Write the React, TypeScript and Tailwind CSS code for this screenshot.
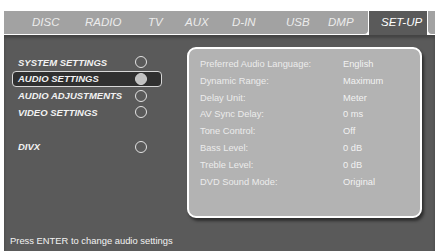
import React from "react";

const tabs = [
  { label: "DISC", w: "w-[53px]" },
  { label: "RADIO", w: "w-[63px]" },
  { label: "TV", w: "w-[37px]" },
  { label: "AUX", w: "w-[47px]" },
  { label: "D-IN", w: "w-[54px]" },
  { label: "USB", w: "w-[42px]" },
  { label: "DMP", w: "w-[40px]" },
];

const menu = [
  { label: "SYSTEM SETTINGS", active: false },
  { label: "AUDIO SETTINGS", active: true },
  { label: "AUDIO ADJUSTMENTS", active: false },
  { label: "VIDEO SETTINGS", active: false },
];

const settings = [
  ["Preferred Audio Language:", "English"],
  ["Dynamic Range:", "Maximum"],
  ["Delay Unit:", "Meter"],
  ["AV Sync Delay:", "0 ms"],
  ["Tone Control:", "Off"],
  ["Bass Level:", "0 dB"],
  ["Treble Level:", "0 dB"],
  ["DVD Sound Mode:", "Original"],
];

function MenuRow({ label, active }: { label: string; active: boolean }) {
  return (
    <div
      className={
        active
          ? "flex h-[16.7px] items-center justify-between rounded-[4px] border border-[#d8d8d8] bg-[#303030] pl-[5px] pr-[14px]"
          : "flex h-[16.7px] items-center justify-between border border-transparent pl-[5px] pr-[14px]"
      }
    >
      <span className="text-[9.5px] font-bold italic leading-none text-[#f2f2f2]">
        {label}
      </span>
      <span
        className={
          active
            ? "h-[12px] w-[12px] rounded-full border-[1.5px] border-[#d0d0d0] bg-[#c2c2c2]"
            : "h-[12px] w-[12px] rounded-full border-[1.5px] border-[#e2e2e2]"
        }
      />
    </div>
  );
}

export default function App() {
  return (
    <div
      className="flex h-[251px] w-[435px] flex-col overflow-hidden bg-white pl-[4px] pt-[11px]"
      style={{ fontFamily: '"Liberation Sans", Arial, sans-serif' }}
    >
      {/* barra de abas */}
      <div className="flex h-[24px] shrink-0">
        <div className="flex w-[365px] items-center rounded-br-[5px] border-r-[1.5px] border-b-[1.5px] border-white bg-[#a2a2a2] pl-[28px]">
          {tabs.map((t) => (
            <span
              key={t.label}
              className={`${t.w} shrink-0 text-[11.5px] italic leading-none text-[#ececec]`}
            >
              {t.label}
            </span>
          ))}
        </div>
        <div className="flex w-[58px] items-center bg-[#5a5a5a] pl-[12px]">
          <span className="text-[11.5px] italic leading-none text-white">
            SET-UP
          </span>
        </div>
        <div className="flex-1 rounded-bl-[5px] border-l-[1.5px] border-b-[1.5px] border-white bg-[#a2a2a2]" />
      </div>

      {/* area principal */}
      <div className="flex flex-1 flex-col bg-[#5a5a5a] shadow-[inset_0_3px_3px_rgba(0,0,0,0.25)]">
        <div className="flex">
          <div className="ml-[8px] mt-[19px] flex w-[150px] flex-col">
            {menu.map((m) => (
              <MenuRow key={m.label} label={m.label} active={m.active} />
            ))}
            <div className="mt-[18px]">
              <MenuRow label="DIVX" active={false} />
            </div>
          </div>

          <div className="ml-[25px] mt-[12px] h-[171px] w-[235px] rounded-[9px] border-2 border-white bg-[#b3b3b3] pl-[11px] pt-[7px] shadow-[2px_3px_3px_rgba(0,0,0,0.5)]">
            {settings.map(([k, v]) => (
              <div key={k} className="flex h-[16.9px] items-center">
                <span className="w-[143px] text-[9.3px] leading-none text-[#ececec]">
                  {k}
                </span>
                <span className="text-[9.3px] leading-none text-[#f2f2f2]">
                  {v}
                </span>
              </div>
            ))}
          </div>
        </div>

        <div className="mt-auto pb-[6px] pl-[6px] text-[9.4px] leading-none text-[#f2f2f2]">
          Press ENTER to change audio settings
        </div>
      </div>
    </div>
  );
}
